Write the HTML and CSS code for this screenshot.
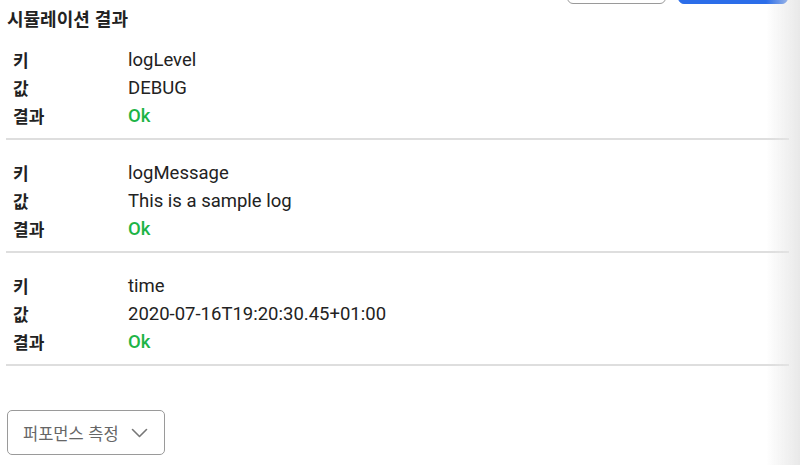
FILE: index.html
```html
<!DOCTYPE html>
<html lang="ko">
<head>
<meta charset="utf-8">
<title>시뮬레이션 결과</title>
<link rel="stylesheet" href="styles.css">
</head>
<body>
<div class="page">
  <div class="toolbar">
    <button class="btn btn-outline" type="button">취소</button>
    <button class="btn btn-primary" type="button">실행</button>
  </div>
  <h2 class="title">시뮬레이션 결과</h2>
  <div class="results">
    <dl class="group">
      <dt>키</dt><dd>logLevel</dd>
      <dt>값</dt><dd>DEBUG</dd>
      <dt>결과</dt><dd class="ok">Ok</dd>
    </dl>
    <dl class="group">
      <dt>키</dt><dd>logMessage</dd>
      <dt>값</dt><dd>This is a sample log</dd>
      <dt>결과</dt><dd class="ok">Ok</dd>
    </dl>
    <dl class="group">
      <dt>키</dt><dd>time</dd>
      <dt>값</dt><dd>2020-07-16T19:20:30.45+01:00</dd>
      <dt>결과</dt><dd class="ok">Ok</dd>
    </dl>
  </div>
  <button class="perf" type="button">퍼포먼스 측정
    <svg class="chev" width="17" height="10" viewBox="0 0 17 10"><path d="M1.5 1.5 L8.5 8.5 L15.5 1.5" fill="none" stroke="#777" stroke-width="1.6" stroke-linecap="round" stroke-linejoin="round"/></svg>
  </button>
</div>
<div class="edge"></div>
</body>
</html>
```
FILE: styles.css
```css
html, body {
  margin: 0;
  padding: 0;
  background: #fff;
}
body {
  font-family: Roboto, "Noto Sans CJK KR", sans-serif;
  color: #222;
}
.page {
  width: 800px;
  padding: 1px 11px 0 6px;
  box-sizing: border-box;
}
.toolbar {
  display: flex;
  justify-content: flex-end;
  gap: 12px;
  margin-top: -33px;
  height: 36px;
  padding-right: 1px;
}
.btn {
  height: 36px;
  border-radius: 6px;
  font-family: "Noto Sans CJK KR", sans-serif;
  font-size: 14px;
  box-sizing: border-box;
}
.btn-outline {
  width: 99px;
  background: #fff;
  border: 1px solid #9a9a9a;
  color: #444;
}
.btn-primary {
  width: 110px;
  background: #2b6de9;
  border: 1px solid #2b6de9;
  color: #fff;
}
.title {
  margin: 2px 0 0 1px;
  font-family: "Noto Sans CJK KR", sans-serif;
  font-size: 18px;
  font-weight: 700;
  line-height: 24px;
  color: #222;
}
.group {
  display: grid;
  grid-template-columns: 115px 1fr;
  margin: 0;
  padding: 19px 0 8px 7px;
  border-bottom: 2px solid #dedede;
  line-height: 28px;
}
.group:first-child {
  padding-top: 16px;
}
.group dt {
  font-family: "Noto Sans CJK KR", sans-serif;
  font-weight: 700;
  font-size: 17px;
  color: #222;
}
.group dd {
  margin: 0;
  font-family: Roboto, sans-serif;
  font-size: 18.5px;
  color: #222;
}
.group dd.ok {
  color: #1db446;
  font-weight: 500;
}
.perf {
  display: flex;
  align-items: center;
  gap: 12px;
  margin: 44px 0 0 1px;
  width: 158px;
  height: 45px;
  padding: 0 0 0 15px;
  box-sizing: border-box;
  background: #fff;
  border: 1px solid #9a9a9a;
  border-radius: 5px;
  font-family: "Noto Sans CJK KR", sans-serif;
  font-size: 16.5px;
  color: #666;
}
.chev {
  margin-top: 1px;
}
.edge {
  position: fixed;
  top: 0;
  right: 0;
  width: 34px;
  height: 100%;
  background: linear-gradient(to right, rgba(230,230,230,0), rgba(230,230,230,0.9));
  pointer-events: none;
}
```
